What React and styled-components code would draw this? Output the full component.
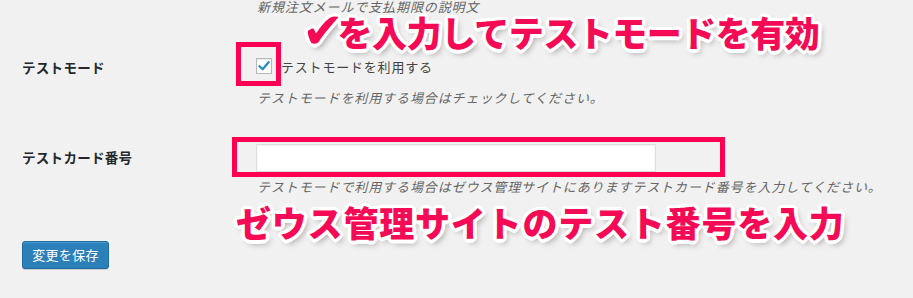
import React from "react";
import styled, { createGlobalStyle } from "styled-components";

const Global = createGlobalStyle`
  html, body { margin: 0; padding: 0; background: #f1f1f1; }
  body { font-family: "Noto Sans CJK JP", "Noto Sans", sans-serif; color: #444; overflow: hidden; }
`;

const Page = styled.div`
  position: relative;
  width: 913px;
  height: 298px;
  padding-left: 22px;
  box-sizing: border-box;
  overflow: hidden;
`;

const Grid = styled.div`
  display: grid;
  grid-template-columns: 234px 1fr;
  align-items: start;
`;

const Label = styled.div`
  font-size: 13.5px;
  font-weight: 700;
  color: #23282d;
  line-height: 18px;
  letter-spacing: 0.3px;
  padding-top: ${(p) => p.$pt || 0}px;
`;

const Cell = styled.div`
  display: flex;
  flex-direction: column;
  align-items: flex-start;
  margin-top: ${(p) => p.$mt || 0}px;
`;

const Description = styled.p`
  margin: ${(p) => p.$mt || 0}px 0 0 1px;
  font-size: 13px;
  font-style: italic;
  color: #666;
  line-height: 18px;
  letter-spacing: 0.9px;
  white-space: nowrap;
`;

const CheckRow = styled.label`
  display: flex;
  align-items: center;
  height: 18px;
  font-size: 13px;
  color: #444;
  letter-spacing: 0.8px;
`;

const Box = styled.span`
  width: 16px;
  height: 16px;
  box-sizing: border-box;
  border: 1px solid #b4b9be;
  background: #fff;
  box-shadow: inset 0 1px 2px rgba(0, 0, 0, 0.1);
  display: flex;
  align-items: center;
  justify-content: center;
  margin-right: 9px;
`;

const TextInput = styled.div`
  width: 400px;
  height: 28px;
  box-sizing: border-box;
  background: #fff;
  border: 1px solid #ddd;
  box-shadow: inset 0 1px 2px rgba(0, 0, 0, 0.07);
`;

const Button = styled.button`
  margin-top: ${(p) => p.$mt || 0}px;
  width: 87px;
  height: 28px;
  padding: 0;
  background: #2b80b9;
  border: 1px solid #1f6a9e;
  border-radius: 3px;
  box-shadow: inset 0 1px 0 rgba(120, 200, 230, 0.4), 0 1px 0 rgba(0, 0, 0, 0.15);
  color: #fff;
  font-family: "Noto Sans CJK JP", sans-serif;
  font-size: 13px;
  letter-spacing: 0.3px;
  line-height: 26px;
`;

const Highlight = styled.div`
  position: absolute;
  left: ${(p) => p.$x}px;
  top: ${(p) => p.$y}px;
  width: ${(p) => p.$w}px;
  height: ${(p) => p.$h}px;
  box-sizing: border-box;
  border: 5px solid #ff0052;
`;

const ring = [];
for (let i = 0; i < 16; i++) {
  const a = (i / 16) * Math.PI * 2;
  ring.push(`${(Math.cos(a) * 3.5).toFixed(2)}px ${(Math.sin(a) * 3.5).toFixed(2)}px 0 #fff`);
}

const Annotation = styled.div`
  position: absolute;
  left: ${(p) => p.$x}px;
  top: ${(p) => p.$y}px;
  font-family: "Noto Sans CJK JP", "DejaVu Sans", sans-serif;
  font-weight: 900;
  font-size: 35px;
  line-height: 1;
  letter-spacing: ${(p) => p.$ls || 0}px;
  color: #f50a55;
  white-space: nowrap;
  text-shadow: ${ring.join(", ")}, 3px 4px 6px rgba(0, 0, 0, 0.35);
`;

const Tick = styled.span`
  display: inline-block;
  font-family: "DejaVu Sans", sans-serif;
  font-weight: 700;
  font-size: 50px;
  line-height: 35px;
  vertical-align: top;
  margin: 0 -6px 0 -3px;
`;

export default function App() {
  return (
    <>
      <Global />
      <Page>
        <Grid>
          <div />
          <Description $mt={-2}>新規注文メールで支払期限の説明文</Description>

          <Label $pt={42}>テストモード</Label>
          <Cell $mt={41}>
            <CheckRow>
              <Box>
                <svg width="12" height="12" viewBox="0 0 12 12">
                  <path d="M1.5 6.2 L4.6 9.2 L10.6 2.2" fill="none" stroke="#1e8cbe" strokeWidth="2.2" strokeLinecap="round" strokeLinejoin="round" />
                </svg>
              </Box>
              テストモードを利用する
            </CheckRow>
            <Description $mt={14}>テストモードを利用する場合はチェックしてください。</Description>
          </Cell>

          <Label $pt={41}>テストカード番号</Label>
          <Cell $mt={37}>
            <TextInput />
            <Description $mt={6}>テストモードで利用する場合はゼウス管理サイトにありますテストカード番号を入力してください。</Description>
          </Cell>
        </Grid>
        <Button $mt={45}>変更を保存</Button>

        <Highlight $x={236} $y={42} $w={45} $h={44} />
        <Highlight $x={232} $y={137} $w={493} $h={40} />
        <Annotation $x={305} $y={14} $ls={-0.5}><Tick>✔</Tick>を入力してテストモードを有効</Annotation>
        <Annotation $x={236} $y={204} $ls={0.8}>ゼウス管理サイトのテスト番号を入力</Annotation>
      </Page>
    </>
  );
}
